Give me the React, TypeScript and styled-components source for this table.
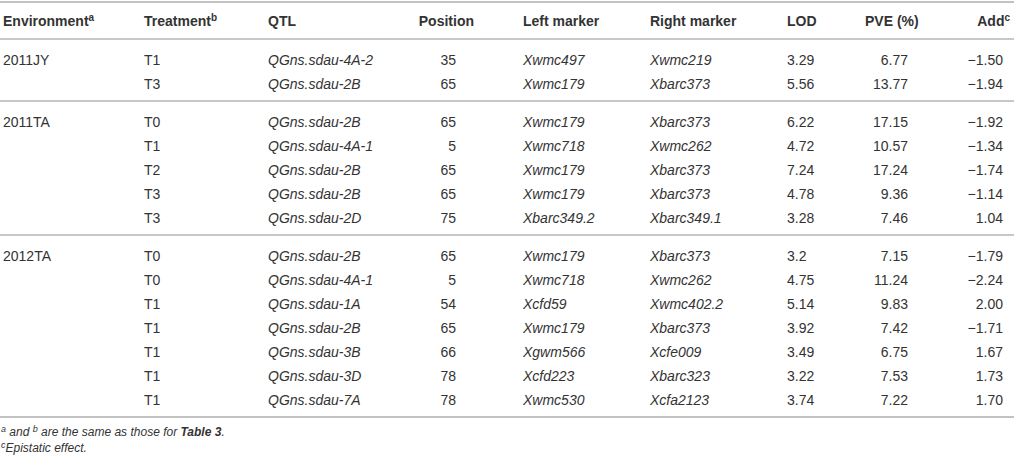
import React from "react";
import styled, { createGlobalStyle } from "styled-components";

const Global = createGlobalStyle`
  html, body { margin: 0; padding: 0; background: #ffffff; }
  body { font-family: "Liberation Sans", Arial, sans-serif; color: #333333; }
`;

type Align = "left" | "right";
interface Col {
  width: number;
  align: Align;
  pad: number;
  hAlign: Align;
  hPad: number;
  italic?: boolean;
}

const cols: Col[] = [
  { width: 141, align: "left", pad: 3, hAlign: "left", hPad: 3 },
  { width: 124, align: "left", pad: 3, hAlign: "left", hPad: 3 },
  { width: 135, align: "left", pad: 3, hAlign: "left", hPad: 3, italic: true },
  { width: 120, align: "right", pad: 64, hAlign: "right", hPad: 46 },
  { width: 127, align: "left", pad: 3, hAlign: "left", hPad: 3, italic: true },
  { width: 137, align: "left", pad: 3, hAlign: "left", hPad: 3, italic: true },
  { width: 76, align: "left", pad: 3, hAlign: "left", hPad: 3 },
  { width: 75, align: "right", pad: 27, hAlign: "left", hPad: 5 },
  { width: 79, align: "right", pad: 11, hAlign: "right", hPad: 4 },
];

const Page = styled.div`
  width: 1016px;
  padding-top: 1px;
`;

const Table = styled.table`
  width: 1014px;
  table-layout: fixed;
  border-collapse: collapse;
  border-top: 2px solid #c2c2c2;
  border-bottom: 2px solid #c2c2c2;
  font-size: 14px;
  color: #333333;
`;

const Group = styled.tbody`
  border-top: 2px solid #c8c8c8;
`;

const HeadCell = styled.th<{ $align: Align; $pad: number }>`
  font-weight: bold;
  text-align: ${(p) => p.$align};
  padding: 0;
  ${(p) => (p.$align === "left" ? `padding-left: ${p.$pad}px;` : `padding-right: ${p.$pad}px;`)}
  height: 35px;
  line-height: 18px;
  vertical-align: middle;
  white-space: nowrap;
`;

const Cell = styled.td<{ $align: Align; $pad: number; $italic?: boolean; $first?: boolean; $last?: boolean }>`
  text-align: ${(p) => p.$align};
  font-style: ${(p) => (p.$italic ? "italic" : "normal")};
  padding: 0;
  ${(p) => (p.$align === "left" ? `padding-left: ${p.$pad}px;` : `padding-right: ${p.$pad}px;`)}
  padding-top: ${(p) => (p.$first ? 8 : 0)}px;
  padding-bottom: ${(p) => (p.$last ? 4 : 0)}px;
  line-height: 24px;
  white-space: nowrap;
  vertical-align: top;
`;

const Sup = styled.sup`
  font-size: 10px;
  line-height: 0;
  vertical-align: 5px;
`;

const Notes = styled.div`
  margin-top: 6px;
  font-size: 12px;
  line-height: 16px;
  font-style: italic;
  color: #333333;
  padding-left: 1px;
`;

const NoteLine = styled.div``;

const NoteSup = styled.sup`
  font-size: 9px;
  line-height: 0;
  vertical-align: 4px;
`;

const Strong = styled.b`
  font-weight: bold;
`;

const M = "\u2212";

const groups: string[][][] = [
  [
    ["2011JY", "T1", "QGns.sdau-4A-2", "35", "Xwmc497", "Xwmc219", "3.29", "6.77", `${M}1.50`],
    ["", "T3", "QGns.sdau-2B", "65", "Xwmc179", "Xbarc373", "5.56", "13.77", `${M}1.94`],
  ],
  [
    ["2011TA", "T0", "QGns.sdau-2B", "65", "Xwmc179", "Xbarc373", "6.22", "17.15", `${M}1.92`],
    ["", "T1", "QGns.sdau-4A-1", "5", "Xwmc718", "Xwmc262", "4.72", "10.57", `${M}1.34`],
    ["", "T2", "QGns.sdau-2B", "65", "Xwmc179", "Xbarc373", "7.24", "17.24", `${M}1.74`],
    ["", "T3", "QGns.sdau-2B", "65", "Xwmc179", "Xbarc373", "4.78", "9.36", `${M}1.14`],
    ["", "T3", "QGns.sdau-2D", "75", "Xbarc349.2", "Xbarc349.1", "3.28", "7.46", "1.04"],
  ],
  [
    ["2012TA", "T0", "QGns.sdau-2B", "65", "Xwmc179", "Xbarc373", "3.2", "7.15", `${M}1.79`],
    ["", "T0", "QGns.sdau-4A-1", "5", "Xwmc718", "Xwmc262", "4.75", "11.24", `${M}2.24`],
    ["", "T1", "QGns.sdau-1A", "54", "Xcfd59", "Xwmc402.2", "5.14", "9.83", "2.00"],
    ["", "T1", "QGns.sdau-2B", "65", "Xwmc179", "Xbarc373", "3.92", "7.42", `${M}1.71`],
    ["", "T1", "QGns.sdau-3B", "66", "Xgwm566", "Xcfe009", "3.49", "6.75", "1.67"],
    ["", "T1", "QGns.sdau-3D", "78", "Xcfd223", "Xbarc323", "3.22", "7.53", "1.73"],
    ["", "T1", "QGns.sdau-7A", "78", "Xwmc530", "Xcfa2123", "3.74", "7.22", "1.70"],
  ],
];

const headers: React.ReactNode[] = [
  <>Environment<Sup>a</Sup></>,
  <>Treatment<Sup>b</Sup></>,
  "QTL",
  "Position",
  "Left marker",
  "Right marker",
  "LOD",
  "PVE (%)",
  <>Add<Sup>c</Sup></>,
];

export default function App() {
  return (
    <Page>
      <Global />
      <Table>
        <colgroup>
          {cols.map((c, i) => (
            <col key={i} style={{ width: c.width }} />
          ))}
        </colgroup>
        <thead>
          <tr>
            {headers.map((h, i) => (
              <HeadCell key={i} $align={cols[i].hAlign} $pad={cols[i].hPad}>
                {h}
              </HeadCell>
            ))}
          </tr>
        </thead>
        {groups.map((rows, gi) => (
          <Group key={gi}>
            {rows.map((r, ri) => (
              <tr key={ri}>
                {r.map((v, ci) => (
                  <Cell
                    key={ci}
                    $align={cols[ci].align}
                    $pad={cols[ci].pad}
                    $italic={cols[ci].italic}
                    $first={ri === 0}
                    $last={ri === rows.length - 1}
                  >
                    {v}
                  </Cell>
                ))}
              </tr>
            ))}
          </Group>
        ))}
      </Table>
      <Notes>
        <NoteLine>
          <NoteSup>a</NoteSup> and <NoteSup>b</NoteSup> are the same as those for <Strong>Table 3</Strong>.
        </NoteLine>
        <NoteLine>
          <NoteSup>c</NoteSup>Epistatic effect.
        </NoteLine>
      </Notes>
    </Page>
  );
}
